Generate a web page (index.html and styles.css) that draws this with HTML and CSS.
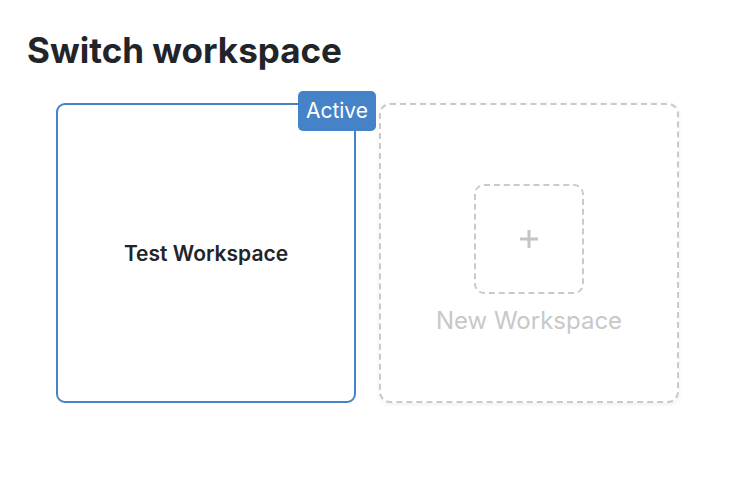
FILE: index.html
```html
<!DOCTYPE html>
<html>
<head>
    <meta charset="UTF-8">
    <title>Switch workspace</title>
    <link rel="stylesheet" href="styles.css">
</head>
<body>
    <div class="container">
        <h1>Switch workspace</h1>
        <div class="workspace-list">
            <!-- Current workspace -->
            <div class="workspace-card active">
                <span class="active-badge">Active</span>
                <div class="workspace-name">Test Workspace</div>
            </div>
            <!-- Create a new one -->
            <div class="workspace-card new">
                <div class="new-icon">
                    <svg width="20" height="20" viewBox="0 0 20 20">
                        <path d="M10 1v18M1 10h18" stroke="currentColor" stroke-width="3"/>
                    </svg>
                </div>
                <div class="new-label">New Workspace</div>
            </div>
        </div>
    </div>
</body>
</html>
```
FILE: styles.css
```css
body {
    margin: 0;
    font-family: Inter, "Noto Sans", sans-serif;
    background-color: #fff;
    color: #212529;
}
.container {
    padding: 28px 27px;
}
h1 {
    margin: 0;
    font-size: 35px;
    font-weight: 700;
    line-height: 44px;
}
.workspace-list {
    display: flex;
    gap: 23px;
    margin-top: 31px;
    padding-left: 29px;
}
.workspace-card {
    position: relative;
    width: 300px;
    height: 300px;
    box-sizing: border-box;
    border-radius: 9px;
    display: flex;
    flex-direction: column;
    align-items: center;
    justify-content: center;
}
.workspace-card.active {
    border: 2px solid #4682c8;
}
.workspace-card.new {
    border: 2px dashed #cacaca;
    border-radius: 11px;
    box-shadow: 0 1px 4px rgba(0, 0, 0, 0.08);
}
.active-badge {
    position: absolute;
    top: -14px;
    right: -22px;
    padding: 6px 8px;
    background-color: #4682c8;
    color: #fff;
    font-size: 21px;
    line-height: 28px;
    border-radius: 5px;
}
.workspace-name {
    font-size: 21px;
    font-weight: 600;
}
.new-icon {
    width: 110px;
    height: 110px;
    box-sizing: border-box;
    border: 2px dashed #cacaca;
    border-radius: 10px;
    display: flex;
    align-items: center;
    justify-content: center;
    color: #c4c4c4;
    margin-top: 14px;
}
.new-label {
    margin-top: 12px;
    color: #c8c8c8;
    font-size: 24px;
    line-height: 30px;
}
```
